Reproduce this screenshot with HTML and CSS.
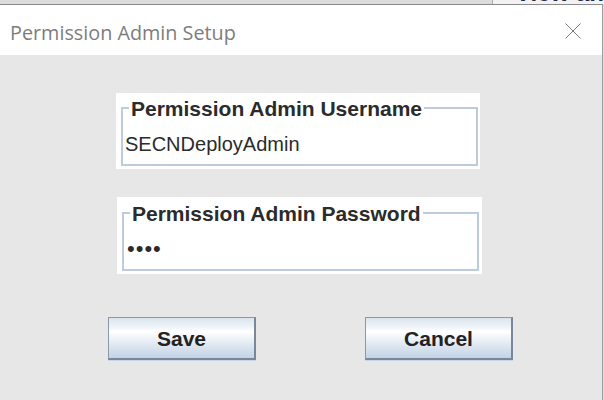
FILE: index.html
```html
<!DOCTYPE html>
<html>
<head>
<meta charset="utf-8">
<title>Permission Admin Setup</title>
<link rel="stylesheet" href="styles.css">
</head>
<body>
<div class="screen">
  <div class="topstrip">
    <div class="strip-left"></div>
    <div class="strip-right"><span class="behind-text">View an</span></div>
  </div>
  <div class="dialog">
    <div class="titlebar">
      <span class="title">Permission Admin Setup</span>
      <svg class="close" width="16" height="16" viewBox="0 0 16 16" aria-label="Close">
        <path d="M0.5 0.5 L15.5 15.5 M15.5 0.5 L0.5 15.5" stroke="#7a7a7a" stroke-width="1" fill="none"/>
      </svg>
    </div>
    <div class="content">
      <div class="panel panel-user">
        <fieldset class="group">
          <legend class="legend">Permission Admin Username</legend>
          <div class="value">SECNDeployAdmin</div>
        </fieldset>
      </div>
      <div class="panel panel-pass">
        <fieldset class="group">
          <legend class="legend">Permission Admin Password</legend>
          <div class="value dots">••••</div>
        </fieldset>
      </div>
      <div class="buttons">
        <button class="btn">Save</button>
        <button class="btn">Cancel</button>
      </div>
    </div>
  </div>
</div>
</body>
</html>
```

FILE: styles.css
```css
html, body {
  margin: 0;
  padding: 0;
}
body {
  width: 604px;
  height: 400px;
  overflow: hidden;
  background: #dedfe2;
}
.screen {
  display: flex;
  flex-direction: column;
  height: 400px;
}
.topstrip {
  display: flex;
  height: 4px;
  overflow: hidden;
  flex: 0 0 4px;
}
.strip-left {
  flex: 0 0 492px;
  background: #dcdcdc;
  border-right: 1px solid #b0b0b0;
}
.strip-right {
  flex: 1;
  background: #f2f2f2;
  overflow: hidden;
}
.behind-text {
  display: block;
  margin-top: -19px;
  padding-left: 22px;
  font: bold 24px/24px "Liberation Sans", sans-serif;
  color: #1d2b4d;
  white-space: nowrap;
}
.dialog {
  width: 602px;
  flex: 1;
  border-top: 1px solid #8a8a8a;
  border-right: 1px solid #9c9c9c;
  background: #e7e7e7;
  display: flex;
  flex-direction: column;
}
.titlebar {
  height: 50px;
  background: #ffffff;
  display: flex;
  align-items: center;
  padding-left: 10px;
  padding-right: 21px;
}
.title {
  flex: 1;
  font-family: "Open Sans", "Noto Sans", sans-serif;
  font-size: 19.8px;
  color: #7d7d7d;
  margin-top: 4px;
}
.close {
  display: block;
  margin-top: 1px;
}
.content {
  padding-top: 38px;
  display: flex;
  flex-direction: column;
  font-family: "Liberation Sans", Arial, sans-serif;
  color: #2b2b2b;
}
.panel {
  background: #ffffff;
  box-sizing: border-box;
}
.panel-user {
  margin-left: 116px;
  width: 364px;
  height: 76px;
  padding: 4px 2px 3px 5px;
}
.panel-pass {
  margin-left: 117px;
  margin-top: 28px;
  width: 365px;
  height: 77px;
  padding: 5px 3px 3px 5px;
}
.group {
  margin: 0;
  padding: 0 2px;
  height: 100%;
  box-sizing: border-box;
  border: 2px solid #bdcbdd;
  min-width: 0;
}
.legend {
  font-weight: bold;
  font-size: 21px;
  line-height: 20px;
  padding: 2px 2px 0 2px;
  margin-left: 4px;
  color: #2b2b2b;
}
.value {
  font-size: 20px;
  line-height: 22px;
  margin-top: 14px;
}
.dots {
  font-size: 22px;
  letter-spacing: 1px;
  margin-left: 1px;
}
.buttons {
  display: flex;
  gap: 109px;
  margin-left: 108px;
  margin-top: 43px;
}
.btn {
  width: 148px;
  height: 43px;
  box-sizing: border-box;
  border-style: solid;
  border-width: 1px 2px 2px 1px;
  border-color: #8a98aa #7a8798 #7a8798 #8a98aa;
  background: linear-gradient(to bottom, #dbe4ee 0%, #eef3f8 22%, #ffffff 34%, #eaf0f6 55%, #d3dfec 80%, #c4d4e7 100%);
  box-shadow: 0 1px 0 #c6d7ea;
  font-family: "Liberation Sans", Arial, sans-serif;
  font-weight: bold;
  font-size: 21px;
  color: #222222;
  padding: 2px 0 0 0;
  margin: 0;
}
```
